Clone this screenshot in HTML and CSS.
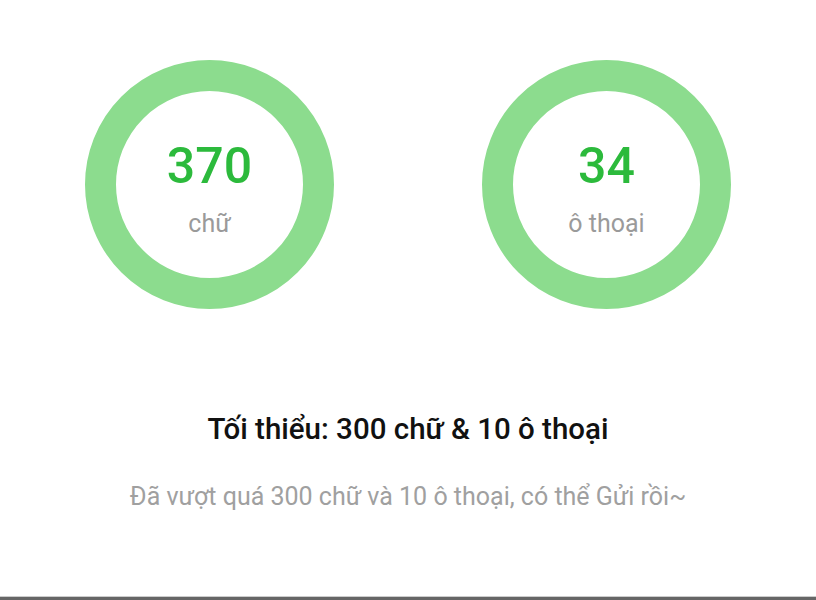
FILE: index.html
```html
<!DOCTYPE html>
<html lang="vi">
<head>
    <meta charset="UTF-8">
    <meta name="viewport" content="width=device-width, initial-scale=1.0">
    <title>Kiểm tra độ dài</title>
    <link rel="stylesheet" href="styles.css">
</head>
<body>
    <div class="page">
        <div class="stats">
            <div class="ring">
                <div class="ring-value">370</div>
                <div class="ring-label">chữ</div>
            </div>
            <div class="ring">
                <div class="ring-value">34</div>
                <div class="ring-label">ô thoại</div>
            </div>
        </div>

        <h2 class="requirement">Tối thiểu: 300 chữ &amp; 10 ô thoại</h2>
        <p class="hint">Đã vượt quá 300 chữ và 10 ô thoại, có thể Gửi rồi~</p>
    </div>
    <div class="bottom-bar"></div>
</body>
</html>
```

FILE: styles.css
```css
html,
body {
    margin: 0;
    height: 100%;
}

body {
    font-family: Roboto, 'Noto Sans', sans-serif;
    background-color: #fff;
    color: #111;
    display: flex;
    flex-direction: column;
}

.page {
    flex: 1;
    display: flex;
    flex-direction: column;
    align-items: center;
    padding-top: 60px;
}

.stats {
    display: flex;
    gap: 148px;
}

.ring {
    width: 187px;
    height: 187px;
    border: 31px solid #8cdc8e;
    border-radius: 50%;
    display: flex;
    flex-direction: column;
    align-items: center;
    justify-content: center;
}

.ring-value {
    font-size: 50px;
    font-weight: 500;
    color: #2cba3c;
    line-height: 1;
    margin-top: 10px;
}

.ring-label {
    font-size: 25px;
    color: #9a9a9a;
    margin-top: 18px;
}

.requirement {
    margin: 103px 0 0;
    font-size: 29.5px;
    font-weight: 500;
    color: #111;
}

.hint {
    margin: 36px 0 0;
    font-size: 25px;
    color: #a0a0a0;
}

.bottom-bar {
    height: 3px;
    background-color: #666;
    border-top: 1px solid #ccc;
}
```
